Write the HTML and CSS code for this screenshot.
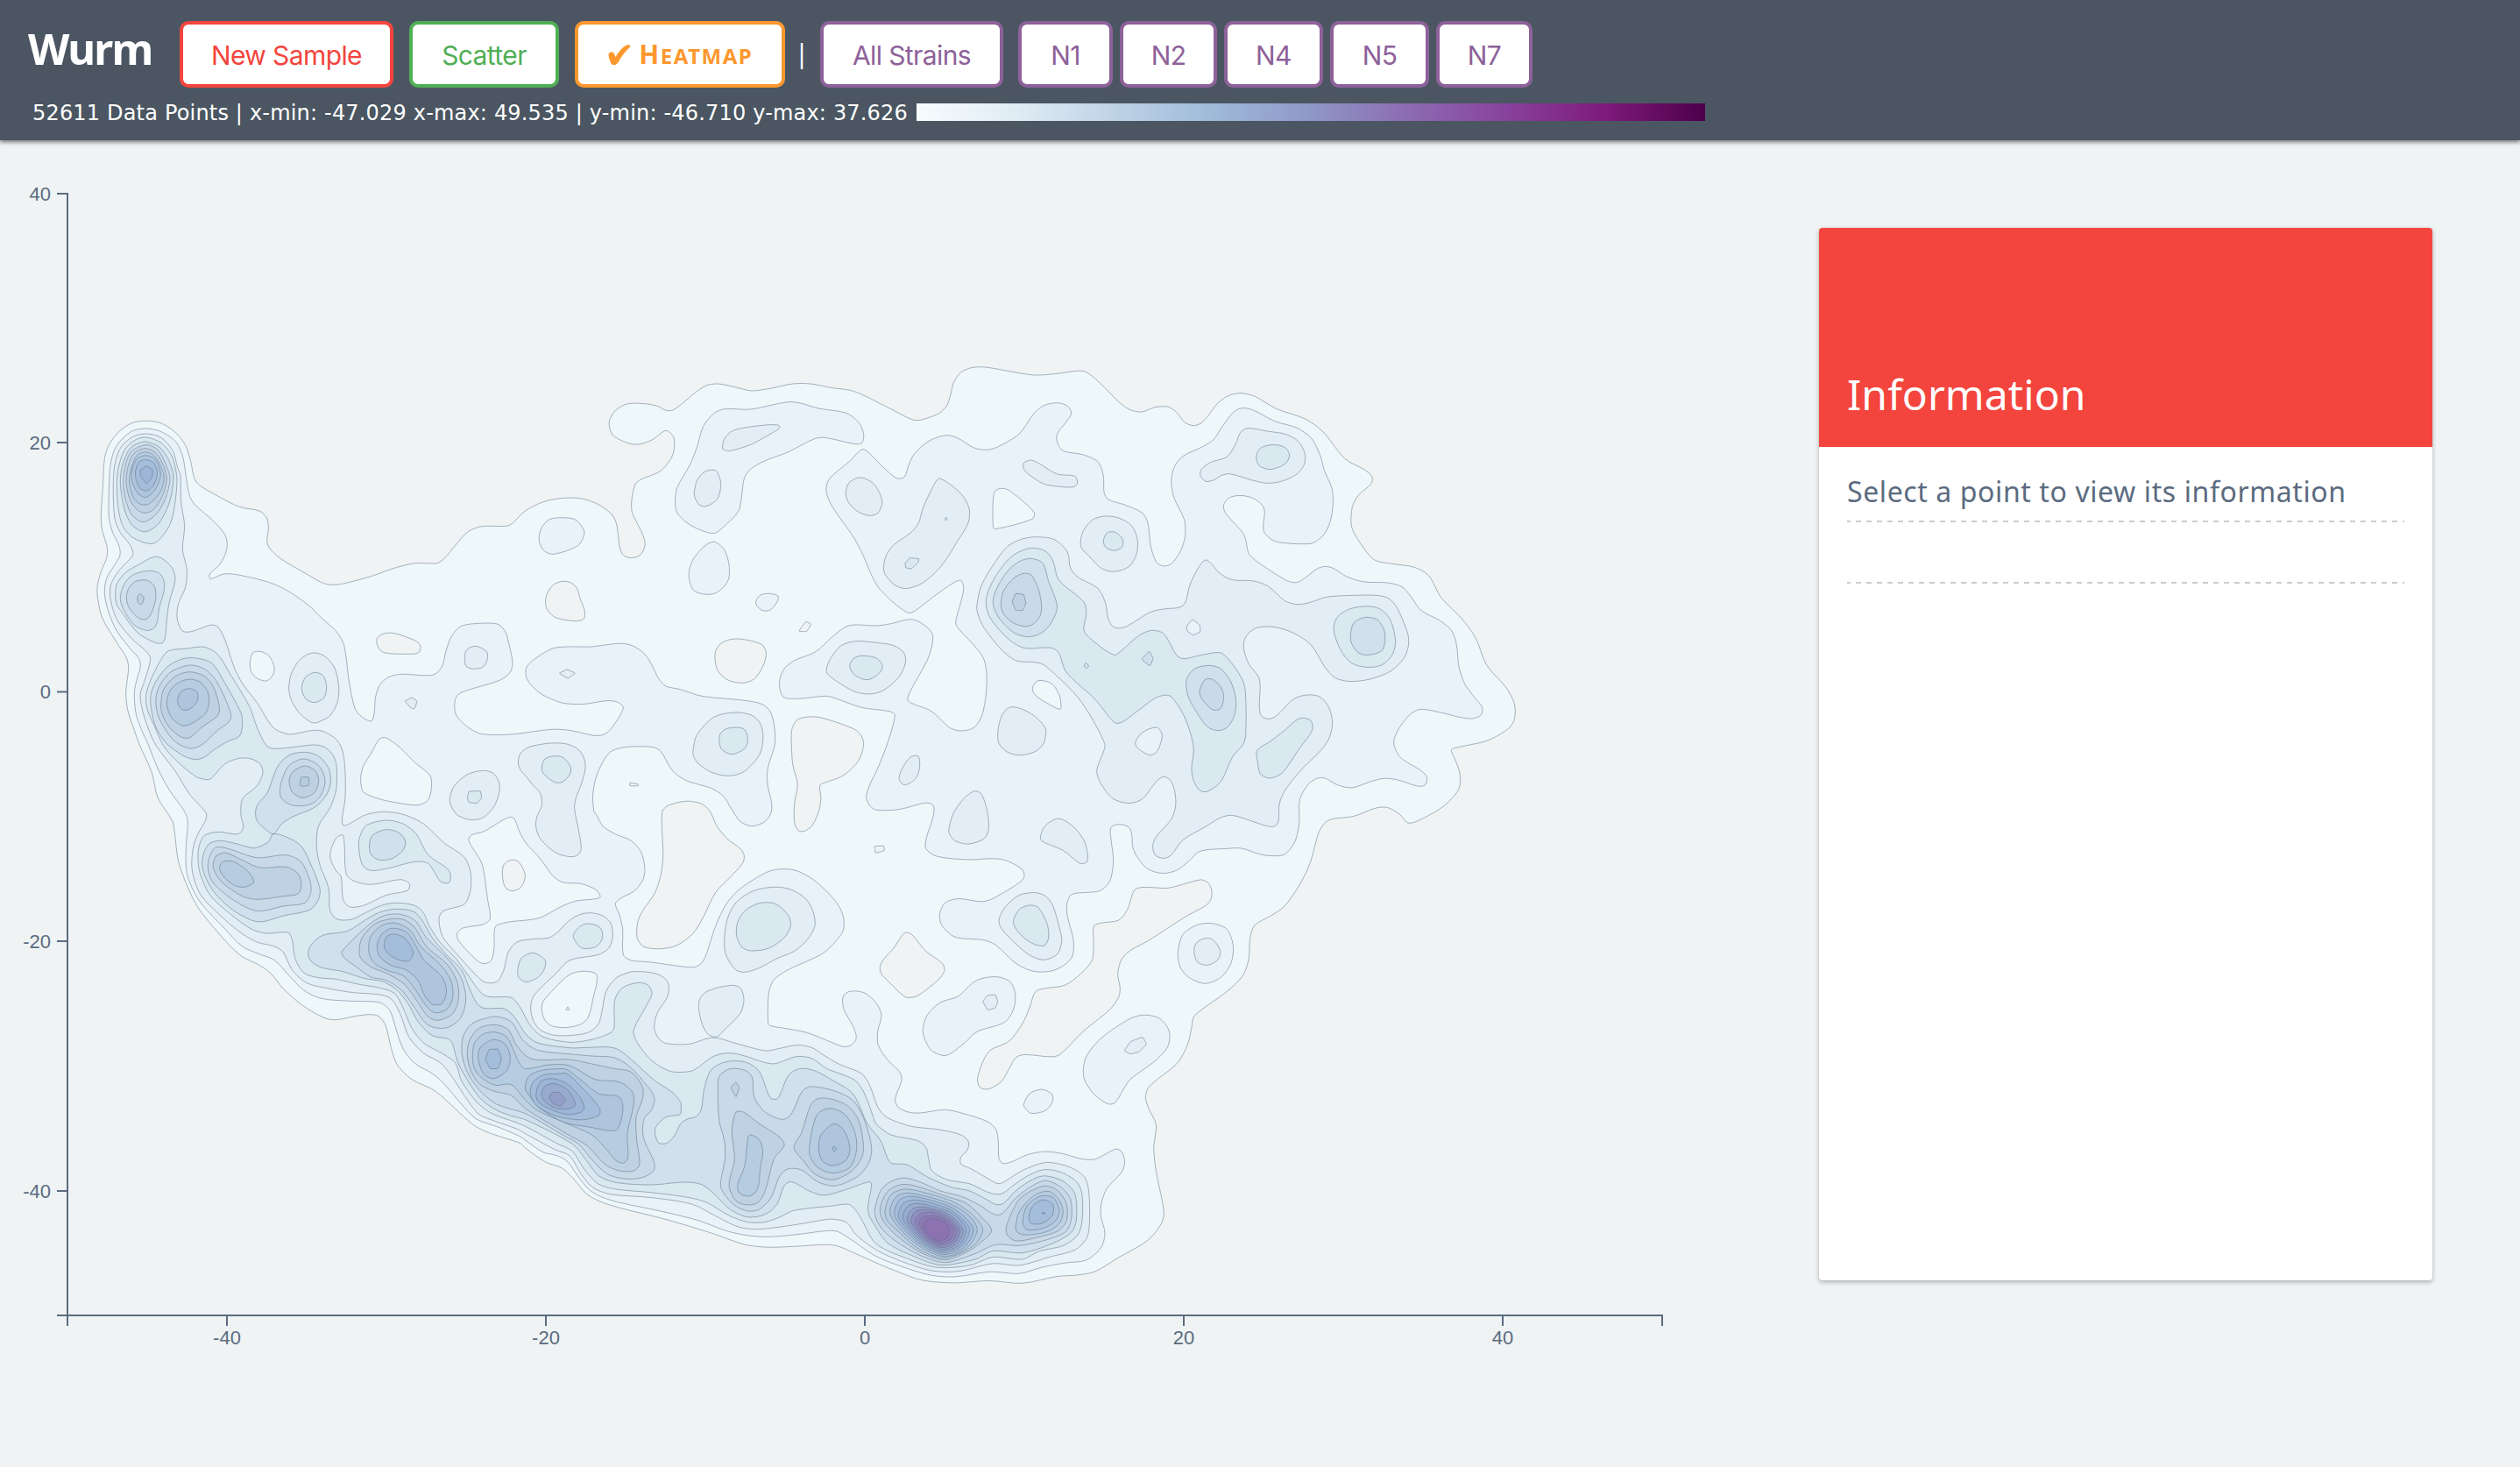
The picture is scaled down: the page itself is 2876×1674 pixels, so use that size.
FILE: index.html
```
<!DOCTYPE html>
<html lang="en">
<head>
<meta charset="utf-8">
<title>Wurm</title>
<link rel="stylesheet" href="styles.css">
</head>
<body>
<header class="topbar">
  <div class="controls">
    <h1 class="brand">Wurm</h1>
    <button class="btn red new-sample">New Sample</button>
    <button class="btn green scatter">Scatter</button>
    <button class="btn orange heatmap"><svg class="check" viewBox="0 0 26 24"><path d="M.5 12.500C0 8.500 5.500 6.500 7 10.500L8.500 14C12 8 16 3.500 20.500 .8C22.500 -.3 26.200.2 25.300 2.200C19 8.500 15.500 13 12 19.500C10 23.500 5 24.200 3.500 21.500C2.200 18.500 1 16 .5 12.500Z"/></svg><span class="smallcaps">H<span>eatmap</span></span></button>
    <span class="divider">|</span>
    <button class="btn purple all">All Strains</button>
    <div class="strains">
      <button class="btn purple n1">N1</button>
      <button class="btn purple n2">N2</button>
      <button class="btn purple n4">N4</button>
      <button class="btn purple n5">N5</button>
      <button class="btn purple n7">N7</button>
    </div>
  </div>
  <div class="status">
    <span class="stats">52611 Data Points | x-min: -47.029 x-max: 49.535 | y-min: -46.710 y-max: 37.626</span>
    <span class="legend"></span>
  </div>
</header>
<main class="content">
  <svg class="chart" viewBox="0 160 2000 1510">
    <g id="contours" class="contours"></g>
    <g class="axis">
      <path d="M65 221H77V1501H65"/>
      <path d="M65 505H77M65 789.500H77M65 1074H77M65 1359H77"/>
      <path d="M77 1513V1501H1897V1513"/>
      <path d="M259 1501V1513M623 1501V1513M987 1501V1513M1351 1501V1513M1715 1501V1513"/>
    </g>
    <g class="labels y">
      <text x="58" y="229">40</text><text x="58" y="513">20</text><text x="58" y="797">0</text><text x="58" y="1082">-20</text><text x="58" y="1367">-40</text>
    </g>
    <g class="labels x">
      <text x="259" y="1534">-40</text><text x="623" y="1534">-20</text><text x="987" y="1534">0</text><text x="1351" y="1534">20</text><text x="1715" y="1534">40</text>
    </g>
  </svg>
  <aside class="card">
    <div class="card-head"><h2>Information</h2></div>
    <div class="card-body">
      <p class="row">Select a point to view its information</p>
      <p class="row"></p>
    </div>
  </aside>
</main>
<script src="contours.js"></script>
</body>
</html>
```
FILE: styles.css
```
* { box-sizing: border-box; }
body {
  margin: 0;
  min-height: 1674px;
  background: #eff3f4;
  color: #5b6b80;
  font-family: "Noto Sans", "Open Sans", sans-serif;
  overflow: hidden;
}
.topbar {
  position: relative;
  height: 160px;
  padding: 24px 0 0 32px;
  background: #4b5662;
  color: #fff;
  box-shadow: 0 2px 5px rgba(0, 0, 0, .55);
}
.controls { display: flex; height: 76px; white-space: nowrap; }
.brand {
  width: 173px;
  margin: 0;
  font-size: 49px;
  font-weight: 700;
  line-height: 63px;
  letter-spacing: -1.7px;
}
.btn {
  height: 76px;
  padding: 2px 0 0;
  border: 4px solid currentColor;
  border-radius: 10px;
  background: #fff;
  font: 400 30px/66px Inter, Roboto, sans-serif;
  letter-spacing: -.6px;
  white-space: nowrap;
}
.red { color: #f3453e; }
.green { color: #50ae55; }
.orange { color: #fd982f; }
.purple { color: #8d6199; }
.new-sample { width: 244px; margin-right: 18px; }
.scatter { width: 171px; margin-right: 18px; }
.heatmap { width: 240px; display: flex; align-items: center; justify-content: center; gap: 9px; }
.check { width: 26px; height: 24px; margin-top: -1px; fill: currentColor; }
.smallcaps { font: 700 30px/66px "Noto Sans", sans-serif; letter-spacing: 1.5px; margin-right: -1.5px; }
.smallcaps span { font-size: 24px; text-transform: uppercase; }
.divider { width: 40px; padding-right: 2px; text-align: center; font-size: 30px; line-height: 74px; }
.all { width: 209px; margin-right: 17px; }
.strains { display: flex; gap: 8px; }
.n1 { width: 108px; }
.n2 { width: 111px; }
.n4, .n5 { width: 113px; }
.n7 { width: 110px; }
.status { display: flex; padding: 18px 0 0 5px; height: 58px; }
.stats { width: 1009px; font-family: "DejaVu Sans", sans-serif; font-size: 24px; line-height: 23px; white-space: nowrap; letter-spacing: .18px; }
.legend {
  width: 900px;
  height: 20px;
  background: linear-gradient(90deg, #f7fcfd, #e0ecf4 12.5%, #bfd3e6 25%, #9fbad9 37.5%, #8f97c7 50%, #8c6bb1 62.500%, #88419d 75%, #7d1a7a 87.500%, #4d004b);
}
.content { display: flex; align-items: flex-start; }
.chart { width: 2000px; height: 1510px; flex: none; }
.contours path { stroke: #5b6b80; stroke-opacity: .5; stroke-width: 1; fill-rule: evenodd; stroke-linejoin: round; }
.axis path { fill: none; stroke: #5b6b80; stroke-width: 2; }
.labels { fill: #5b6b80; font: 22px "Liberation Sans", Arial, sans-serif; }
.labels.y { text-anchor: end; }
.labels.x { text-anchor: middle; }
.card {
  width: 700px;
  height: 1201px;
  margin: 100px 0 0 76px;
  border-radius: 4px;
  background: #fff;
  overflow: hidden;
  box-shadow: 0 2px 5px rgba(0, 0, 0, .3);
}
.card-head { height: 250px; padding: 158px 32px 0; background: #f3453e; color: #fff; }
.card-head h2 { margin: 0; font-size: 48px; font-weight: 400; line-height: 64px; letter-spacing: .1px; }
.card-body { padding: 16px 32px; }
.row {
  margin: 0;
  height: 70px;
  background: repeating-linear-gradient(90deg, #ccc 0 4px, transparent 4px 10px, #ccc 10px 12px) 0 100% / 100% 2px no-repeat;
  font-size: 32px;
  line-height: 70px;
  letter-spacing: .6px;
  white-space: nowrap;
}
```
FILE: contours.js
```
// Density contours. Every ring is a list of points given in one of the survey tiles A-H;
// a tile is [x origin, y origin, x step, y step].
const tiles = {
  A: [0, 400, 1 / 3, 1 / 3],
  B: [450, 450, 550 / 1568, 1 / 3],
  C: [950, 400, 1 / 3, 1 / 3],
  D: [1350, 400, 1 / 3, 560 / 1568],
  E: [150, 850, 1 / 3, 1 / 3],
  F: [600, 850, 1 / 3, 600 / 1568],
  G: [1000, 850, 1 / 3, 640 / 1568],
  H: [0, 0, 1, 1]
};
const colors = ["#eef7fa", "#eaf2f9", "#e2edf5", "#dae8f0", "#d2e0ed", "#c9d9e8", "#bfd2e3", "#b6cce1", "#afc5de",
  "#a4bdda", "#9db5d6", "#98abcf", "#949fc9", "#918fc1", "#8f85bc", "#8d7bb6", "#8c72b1"];
const levels = [
[ // 1
"A 502,241 550,248 600,280 635,325 652,375 672,450 740,495 820,535 890,550 914,575 919,610 914,650 922,675 960,712 1050,765 1105,796 1140,802 1175,798 1270,773 1350,745 1420,728 1480,729 B 142,577 165,560 200,515 240,470 285,452 365,451 385,441 425,400 480,370 540,356 605,356 660,375 705,408 722,440 728,480 734,525 745,550 770,560 800,550 815,520 812,490 790,440 773,400 774,350 790,300 865,263 905,210 910,150 884,124 840,155 795,171 755,165 710,138 699,95 720,55 760,32 825,33 860,42 884,55 908,53 950,20 H 791,450 806,440 820,438 840,442 858,446 880,443 905,438 925,438 C 0,128 60,136 100,150 200,200 275,237 305,237 365,215 392,188 405,150 415,110 440,75 480,58 530,58 600,70 690,84 760,80 850,69 880,80 930,125 985,180 1020,203 1060,210 1105,194 1150,193 1180,213 1205,245 1235,257 1260,250 1285,225 1315,185 D 150,147 195,136 245,146 320,186 420,219 480,260 555,346 620,380 647,402 645,425 600,463 580,500 577,560 600,605 655,668 720,682 790,692 840,718 885,790 955,857 1003,920 1040,1005 1105,1075 1132,1120 1138,1155 1130,1190 1105,1215 1040,1247 940,1268 919,1276 930,1303 948,1350 945,1400 900,1450 850,1481 775,1510 740,1480 700,1460 660,1462 585,1488 510,1497 485,1510 465,1540 H 1502,960 1495,985 1483,1010 1465,1035 G 1350,478 1295,505 1280,540 1275,600 1255,645 1200,690 1090,757 1080,790 1065,840 1030,890 935,955 922,985 935,1020 958,1060 955,1095 950,1130 960,1200 985,1305 975,1340 930,1385 830,1433 750,1472 690,1482 620,1486 500,1505 385,1498 270,1504 160,1497 80,1475 0,1448 F 1150,1525 1070,1495 1030,1490 930,1495 830,1498 750,1490 640,1457 480,1415 280,1370 210,1340 160,1290 120,1260 70,1245 0,1203 E 1330,1363 1230,1330 1170,1300 1040,1185 960,1145 910,1095 890,1040 870,960 848,930 820,923 770,928 700,941 660,934 590,895 520,835 480,785 440,755 380,725 330,680 230,560 190,480 160,395 148,300 140,260 90,180 70,95 28,0 A 460,1300 437,1230 431,1170 440,1085 432,1050 400,1000 350,915 335,850 333,810 345,760 365,710 367,675 350,615 346,570 352,470 358,370 375,320 410,275 455,247",
"A 1291,985 1310,970 1345,967 1390,980 1430,998 1440,1015 1432,1035 1400,1039 1315,1034 1293,1012",
"B 492,710 498,680 520,650 550,640 575,645 595,665 605,700 619,740 617,768 590,776 525,764 497,735",
"B 1044,885 1060,855 1090,840 1130,838 1195,856 1210,885 1200,930 1170,975 1130,988 1080,975 1050,940",
"B 1317,810 1340,778 1356,787 1341,812",
"B 1293,1150 1310,1115 1340,1105 1385,1106 1495,1145 1520,1170 1527,1200 1510,1255 1460,1305 1405,1328 1385,1338 1388,1385 1380,1430 1360,1475 1335,1495 1315,1494 1302,1465 1302,1400 1312,1335 1297,1270 1293,1220",
"F 467,200 490,180 550,168 600,175 630,197 655,243 690,280 735,310 748,330 743,352 700,395 650,440 610,510 575,560 520,597 460,608 405,602 382,577 383,530 400,495 440,445 462,390 470,330",
"F 1195,303 1225,301 1228,315 1198,322",
"F 357,113 385,117 385,122 357,122",
"E 1270,445 1275,410 1300,394 1325,400 1348,445 1335,485 1305,500 1280,488",
"G 13,620 25,600 60,568 97,526 120,529 170,577 225,610 234,630 215,655 145,700 120,706 97,704 40,660 17,640",
"G 745,507 770,498 830,490 860,460 885,405 920,398 1000,400 1110,377 1135,385 1148,405 1147,430 1130,448 1060,480 930,548 870,575 840,600 827,640 835,680 830,705 800,740 710,800 630,865 600,872 510,866 480,873 455,905 430,940 385,962 355,957 347,930 385,858 455,828 500,780 525,735 545,690 575,681 645,672 700,640 740,600 744,550",
"F 138,790 144,781 149,790"
],
[ // 2
"A 500,267 550,277 600,310 625,360 640,450 650,500 670,530 730,583 770,630 778,665 770,700 750,735 718,765 720,782 770,764 850,775 940,800 1000,832 1060,875 1100,915 1150,960 1175,1000 1185,1050 1195,1130 1215,1225 1240,1255 1272,1268 1282,1235 1285,1190 1300,1145 1330,1118 1375,1108 1450,1112 B 130,959 155,932 168,880 185,830 215,795 260,785 335,786 360,810 372,850 385,920 375,955 340,980 215,1022 198,1045 200,1095 240,1140 285,1163 380,1164 510,1147 570,1150 650,1168 680,1165 705,1145 745,1074 725,1053 690,1049 620,1060 555,1058 515,1045 470,1020 432,975 430,935 465,900 515,870 565,864 640,864 730,853 775,860 815,890 840,930 860,973 884,999 930,1010 1000,1033 1140,1048 1200,1062 1225,1090 1237,1140 1238,1200 1215,1280 1215,1340 1228,1400 1225,1435 1205,1463 1165,1478 1125,1462 1095,1415 1070,1375 1030,1348 950,1322 905,1288 865,1220 835,1207 750,1208 700,1227 660,1300 646,1370 650,1430 F 240,205 265,243 310,267 360,285 395,320 408,370 400,405 370,437 330,455 307,473 320,505 332,550 334,625 360,642 430,648 545,662 580,662 603,650 620,620 650,540 690,470 740,425 830,378 885,370 930,376 990,405 1060,465 1085,505 1090,540 1080,565 1020,620 900,670 850,700 832,740 830,830 840,838 920,850 970,860 1050,888 1090,900 1115,895 1132,873 1120,838 1090,790 1085,755 1100,738 1130,734 1165,742 1200,770 1218,805 1205,855 1207,895 1240,940 1280,975 1287,1000 1265,1055 1275,1080 1310,1095 G 150,1029 235,1020 300,1031 380,1053 410,1075 418,1110 420,1155 432,1170 460,1167 520,1145 580,1137 640,1143 700,1157 750,1158 820,1130 840,1137 851,1165 840,1195 790,1240 770,1285 770,1320 783,1365 770,1405 720,1440 650,1448 570,1460 490,1478 390,1473 270,1487 190,1483 100,1462 0,1430 F 1130,1485 1070,1452 1030,1449 930,1460 830,1467 760,1463 690,1450 590,1418 460,1390 300,1360 230,1335 190,1300 140,1240 100,1223 60,1215 0,1180 E 1330,1340 1260,1310 1180,1280 1130,1230 1070,1160 1030,1125 970,1090 930,1040 905,970 885,910 850,882 750,877 650,868 590,840 540,790 490,737 440,717 380,690 320,630 230,530 190,440 187,350 193,260 180,225 130,155 90,80 58,0 A 485,1300 465,1240 460,1170 470,1120 480,1085 476,1055 450,1025 400,960 370,890 358,830 365,780 395,730 411,700 408,670 385,620 373,570 374,450 380,380 400,325 450,277",
"A 856,1070 865,1035 890,1030 920,1045 938,1080 935,1110 912,1131 880,1122 860,1100",
"E 787,140 785,110 795,70 820,30 A 1298,1332 1320,1325 1370,1360 1420,1410 E 1010,92 1025,110 1027,150 1015,190 985,205 940,203 860,188 795,163",
"E 1155,328 1165,308 1205,297 1302,247 1330,300 1350,335 1400,390 1440,445 1470,468 F 150,412 190,414 240,432 254,455 170,466 120,483 50,515 0,523 E 1300,605 1250,618 1242,640 1242,690 1232,738 1206,749 1180,735 1120,670 1115,645 1135,627 1205,614 1228,595 1218,520 1205,425 1195,395",
"F 55,790 60,765 100,725 150,685 195,675 240,682 244,705 232,750 215,810 190,832 140,843 90,838 65,820",
"B 914,370 920,320 960,245 985,180 1005,110 1040,65 1075,50 1160,51 1280,26 1320,30 1380,48 1470,64 1510,95 1527,135 1522,166 1500,170 1400,148 1365,153 1280,198 1200,230 1155,260 1138,290 1130,350 1120,400 1080,445 1043,475 1005,468 955,442 920,405",
"C 102,338 125,350 180,405 222,438 247,432 260,395 280,355 330,310 390,290 430,300 485,333 530,340 570,328 640,285 690,215 725,188 770,179 805,190 818,215 800,245 770,285 770,315 790,343 860,357 910,382 928,430 930,485 945,510 1000,528 1060,555 1080,590 1090,670 1110,725 1135,738 1160,730 1190,690 1207,640 1205,580 1170,505 1160,450 1170,400 1200,362 1270,328 1305,305 1335,260 D 170,200 200,184 240,190 315,226 390,247 440,280 470,335 485,385 510,440 514,490 505,545 485,585 460,607 435,617 360,616 310,607 278,580 276,550 280,515 270,492 235,470 195,463 160,470 140,492 145,518 210,590 225,648 255,675 340,727 375,741 400,738 460,697 490,690 520,698 560,722 620,739 700,742 750,755 780,785 815,830 880,863 920,895 937,940 945,1010 965,1065 1000,1110 1025,1140 1020,1165 990,1176 950,1172 890,1158 820,1146 795,1152 770,1170 735,1215 722,1255 745,1300 820,1345 836,1366 827,1390 800,1391 740,1373 690,1367 640,1378 580,1397 530,1388 485,1366 460,1367 430,1385 400,1435 398,1510 H 1478,960 1466,975 G 1350,310 1310,305 1250,289 1200,290 1110,297 1070,325 1030,350 980,359 930,347 895,315 878,285 875,250 865,230 830,222 803,232 805,270 812,325 800,380 765,408 670,418 653,445 655,480 675,545 672,590 645,615 600,632 540,633 480,612 410,560 370,546 270,537 225,505 217,475 235,442 280,430 365,438 410,425 495,382 507,366 498,347 440,322 390,318 320,321 210,312 170,290 172,260 195,200 196,170 170,162 80,180 0,182 F 1180,183 1166,158 1175,125 1210,60 C 190,1340 214,1248 195,1235 100,1222 0,1187 B 1400,1033 1310,1042 1265,1035 1253,990 1265,945 1300,912 1370,882 1425,830 1470,795 C 80,939 150,942 200,935 265,920 300,930 340,965 343,1000 325,1060 265,1170 260,1200 340,1235 400,1290 440,1302 485,1290 515,1240 529,1130 520,1060 490,1015 430,950 422,930 440,860 449,815 440,787 410,798 350,840 270,898 245,890 200,855 150,800 100,690 70,635 0,535 B 1405,330 1415,290 1480,230",
"C 551,500 560,478 585,472 610,482 690,553 684,577 557,611 550,600",
"C 685,1155 705,1130 750,1140 775,1175 782,1205 780,1228 740,1210 695,1180",
"B 471,490 480,455 505,428 550,422 590,430 617,465 615,490 595,520 520,547 490,538 475,515",
"B 960,600 975,560 1015,515 1043,505 1075,535 1090,590 1085,640 1050,678 1015,685 975,672 960,635",
"B 1176,715 1190,688 1220,682 1248,690 1247,707 1225,737 1198,740",
"G 160,795 175,755 220,720 280,703 340,660 405,648 455,660 475,690 472,735 440,775 345,802 300,835 240,868 190,855 165,820",
"G 1033,580 1050,530 1100,503 1150,499 1200,515 1222,560 1215,610 1180,650 1125,667 1070,650 1040,620",
"G 709,910 720,870 770,820 870,765 920,755 970,765 1003,800 1000,840 960,880 870,935 845,965 818,1000 795,1004 750,980 715,940",
"G 505,1005 525,975 565,963 600,975 605,995 580,1022 530,1030 508,1013"
],
[ // 3
"A 500,285 550,297 590,340 608,400 618,430 620,520 632,600 625,680 640,750 635,810 610,870 607,920 625,960 655,962 720,940 745,945 770,990 800,1080 830,1140 880,1205 935,1290 985,1313 1020,1310 1075,1300 1110,1305 1155,1335 1175,1380 1182,1450 E 732,180 725,275 800,240 860,229 930,238 1000,270 1070,335 1140,385 1162,440 1160,500 1140,545 1065,570 1053,600 1065,655 1100,700 1200,807 1230,815 1255,808 1275,770 1290,710 1320,675 1370,665 1430,660 1460,640 F 150,523 185,506 220,501 260,508 290,530 298,570 285,605 250,625 150,643 100,685 30,745 17,780 25,820 50,850 100,866 170,865 220,855 250,830 262,790 275,735 310,695 360,677 410,677 455,685 485,705 490,735 480,760 450,800 440,845 455,875 480,890 560,892 640,873 720,890 820,912 870,905 930,895 980,903 1020,925 1080,955 1150,980 1180,1020 1205,1080 1235,1110 1290,1130 G 130,1068 220,1076 295,1092 317,1112 310,1135 290,1152 290,1172 325,1185 410,1225 430,1225 500,1190 575,1168 630,1172 680,1187 715,1210 728,1250 730,1340 720,1380 680,1412 600,1430 490,1455 400,1450 280,1472 190,1470 90,1445 0,1412 F 1130,1460 1100,1425 1060,1415 1030,1415 930,1430 800,1444 730,1438 650,1405 570,1370 430,1350 290,1340 230,1320 190,1280 150,1225 100,1207 0,1160 E 1320,1315 1250,1290 1190,1265 1150,1215 1100,1140 1060,1090 1000,1055 950,1000 920,920 890,870 850,855 760,848 680,835 600,815 550,770 520,710 490,690 430,675 370,640 300,580 235,510 208,430 210,360 225,310 255,255 255,232 200,170 150,90 83,0 A 510,1300 490,1240 480,1180 495,1130 515,1055 500,1030 450,985 400,920 378,850 380,800 410,750 452,705 455,690 445,665 410,620 392,570 388,450 395,380 415,330 455,295",
"E 680,380 700,320 725,310 735,440 760,465 820,478 920,461 952,475 945,498 870,515 800,548 750,555 725,530 718,450 700,430",
"F 593,790 595,760 620,735 700,717 735,725 747,760 735,800 680,850 660,868 645,871 623,862 605,835",
"A 1387,1200 1410,1188 1428,1200 1420,1225 1410,1226",
"A 989,1150 1000,1100 1030,1055 1070,1035 1110,1045 1145,1085 1160,1150 1155,1205 1130,1250 1095,1270 1080,1275 1060,1270 1020,1235 995,1190",
"B 229,905 235,875 265,862 300,880 303,905 290,932 262,940 235,932",
"B 537,955 562,942 588,955 565,972",
"B 1067,185 1075,150 1100,125 1140,114 1220,104 1250,106 1254,115 1200,150 1160,172 1090,194 1070,188",
"B 976,335 985,295 1010,265 1045,260 1060,290 1062,320 1050,360 1015,383 992,378 977,350",
"C 46,490 55,455 80,438 105,436 140,455 165,495 170,525 155,557 125,565 85,550 55,520",
"B 972,1220 985,1165 1040,1105 1105,1089 1160,1097 1190,1125 1200,1170 1190,1230 1140,1290 1090,1306 1035,1295 990,1265 974,1240",
"B 181,1380 195,1340 240,1300 290,1288 320,1296 340,1325 342,1360 325,1410 290,1448 250,1457 205,1440 183,1405",
"B 403,1260 410,1230 440,1207 510,1194 565,1198 605,1222 622,1270 610,1330 590,1385 F 167,190 180,250 190,310 175,330 145,333 100,320 50,280 35,245 38,215 55,180 50,145 20,115 B 428,1307 410,1285",
"C 0,1045 30,1010 80,995 160,1001 210,1010 245,1035 250,1070 230,1115 200,1145 165,1168 120,1176 70,1165 0,1122 B 1406,950 1412,920",
"C 175,740 185,700 210,665 270,622 295,590 310,540 345,465 367,438 440,490 468,540 465,590 430,650 375,735 310,795 250,815 210,800 180,765",
"C 655,385 680,375 710,388 770,423 830,430 839,455 825,467 780,466 725,457 680,430 656,407",
"C 850,650 860,615 890,580 930,567 980,573 1025,600 1045,650 1040,700 1015,740 965,757 920,745 880,705 852,675",
"D 60,400 63,380 95,357 150,340 180,300 197,262 222,248 290,258 350,267 395,290 418,330 415,365 390,395 340,417 290,424 240,415 160,394 130,400 105,414 78,418",
"C 567,1300 580,1250 605,1222 640,1224 690,1250 728,1290 730,1320 720,1350 690,1375 640,1385 600,1375 570,1345",
"C 228,1465 245,1420 270,1390 295,1390 298,1430 285,1465 247,1487",
"G 250,230 265,190 300,150 337,129 360,137 380,185 385,235 370,262 315,277 270,268 250,248",
"G 563,253 580,225 623,206 670,225 710,265 724,305 720,328 697,331 640,295 567,269",
"G 420,490 440,455 490,420 545,413 580,423 605,450 630,520 635,550 620,585 575,601 530,590 480,558 430,515",
"G 365,717 382,700 408,699 416,717 408,735 382,741",
"G 1088,578 1095,555 1120,542 1150,543 1178,575 1170,600 1135,616 1100,607",
"G 850,855 870,830 912,817 925,837 900,858 870,864",
"F 680,580 690,520 720,470 780,435 855,424 910,432 960,460 985,500 990,540 965,580 920,615 860,637 800,665 750,678 718,670 685,625",
"C 495,870 510,805 550,735 600,670 650,645 700,638 760,647 805,690 815,745 840,775 910,815 935,865 945,920 965,948 1000,947 1040,925 1090,895 1140,884 1185,880 1207,865 1225,800 1255,740 1278,717 1300,732 1320,757 D 150,726 180,734 240,736 290,752 350,800 390,811 430,806 490,788 560,783 660,782 705,792 735,825 770,905 772,945 755,985 710,1025 640,1050 570,1057 520,1045 485,1010 440,942 380,903 310,883 250,887 215,915 208,950 225,1000 262,1050 262,1135 268,1167 293,1177 320,1167 380,1113 430,1100 470,1107 500,1140 512,1190 500,1240 470,1280 410,1335 350,1405 330,1450 328,1500 318,1518 295,1521 240,1505 170,1485 130,1492 80,1520 0,1564 G 1010,308 985,317 955,308 947,280 960,255 1010,208 1025,170 1022,130 1008,100 985,89 960,102 910,152 865,163 810,150 770,110 755,75 765,45 780,15 C 932,1345 880,1245 830,1175 730,1080 700,1068 630,1062 580,1025 520,950 497,900",
"C 1213,945 1232,921 1258,940 1259,963 1235,974 1215,960",
"C 1037,1345 1055,1313 1085,1295 1115,1292 1129,1320 1112,1372 1087,1385 1050,1365"
],
[ // 4
"A 500,297 550,315 585,355 600,400 606,450 595,550 580,600 552,640 528,660 510,661 485,655 450,637 420,600 405,540 400,450 408,390 430,335 465,305",
"A 395,840 400,800 430,760 480,730 528,706 555,712 590,745 600,785 580,860 572,910 565,985 552,1003 520,995 470,965 420,900 400,870",
"A 577,1028 640,1020 700,1015 745,1040 790,1110 855,1220 880,1290 912,1352 940,1363 1000,1358 1075,1350 1110,1357 1140,1385 1152,1420 E 703,130 700,160 680,215 640,280 634,350 645,410 675,490 680,568 705,597 755,597 800,575 860,548 910,541 970,550 1000,575 1020,620 1060,680 1110,730 1150,785 1210,858 1300,865 1330,897 1365,960 1410,1000 1500,1018 F 200,883 260,870 300,850 303,800 305,760 330,725 385,709 420,717 432,743 415,775 370,850 380,885 430,940 490,972 530,976 575,970 640,930 690,919 740,925 810,945 850,951 890,940 930,929 980,935 1030,965 1090,985 1130,1002 1160,1040 1190,1110 G 0,1060 50,1090 140,1106 170,1125 180,1160 190,1190 240,1215 320,1227 380,1250 410,1256 435,1253 480,1225 530,1200 580,1187 640,1197 690,1225 705,1260 705,1330 690,1370 640,1400 560,1415 500,1438 400,1432 320,1455 210,1461 120,1440 0,1395 F 1150,1415 1130,1388 1105,1370 1050,1375 920,1388 870,1408 820,1423 760,1423 700,1405 620,1365 560,1350 430,1335 310,1325 250,1310 200,1265 160,1212 110,1190 0,1138 E 1310,1290 1230,1260 1180,1220 1130,1150 1110,1090 1070,1060 1000,1020 960,970 930,900 900,850 850,832 780,820 700,802 640,797 590,780 560,730 550,665 535,642 460,645 410,630 340,580 270,515 235,440 228,390 232,345 250,310 300,298 365,305 383,283 375,240 380,185 430,140 450,95 440,65 410,48 370,46 320,65 270,117 250,118 220,108 150,50 108,0 A 535,1300 505,1230 500,1180 515,1130 550,1060",
"A 1033,1155 1045,1120 1078,1102 1108,1115 1118,1155 1108,1190 1075,1205 1045,1190",
"C 59,1080 75,1052 105,1045 150,1053 172,1080 158,1107 120,1127 78,1112",
"B 1057,1185 1062,1160 1085,1143 1135,1144 1150,1175 1142,1210 1100,1232 1065,1215",
"B 480,1275 490,1248 520,1238 550,1244 573,1275 572,1300 545,1328 520,1327 485,1298",
"B 238,1380 243,1360 280,1358 284,1382 268,1400 242,1396",
"C 385,575 389,570 393,575 389,582",
"C 249,728 265,710 296,713 294,725 270,747 251,743",
"C 928,650 942,623 968,622 993,645 992,672 965,685 935,673",
"D 251,340 265,312 310,301 350,310 365,335 350,362 300,380 262,368",
"D 517,880 530,850 570,826 630,817 675,826 710,860 728,930 715,975 680,1005 630,1012 580,1000 545,965 520,910",
"D 254,1278 300,1248 350,1212 390,1180 415,1174 440,1185 442,1215 400,1270 345,1345 320,1361 293,1366 265,1352 255,1310",
"C 526,865 535,820 570,755 620,700 680,676 730,687 755,720 775,785 860,860 869,900 862,960 900,1000 965,1042 990,1027 1050,975 1095,958 1135,970 1180,1045 1205,1055 1260,1043 D 125,965 155,985 200,1045 214,1090 215,1230 205,1260 170,1298 135,1370 110,1395 78,1410 55,1403 35,1370 30,1330 37,1275 25,1220 0,1160 C 1160,1185 1135,1180 1100,1193 1050,1230 990,1273 965,1273 900,1195 800,1100 775,1035 750,1018 655,1018 600,985 540,915",
"F 722,570 725,530 750,495 800,472 855,474 900,510 907,540 885,575 830,607 770,614 740,603",
"F 163,570 185,542 215,533 255,545 263,575 240,602 190,605",
"E 1323,770 1335,730 1375,712 1417,738 1410,775 1385,800 1350,811 1325,795",
"E 778,340 785,305 805,275 870,258 930,270 975,305 1015,375 1085,427 1093,450 1087,472 1060,469 1040,440 1015,405 970,400 880,422 820,430 790,410",
"G 470,490 490,460 525,448 555,455 585,500 590,540 575,561 540,557 500,535 475,510"
],
[ // 5
"A 500,312 545,330 575,370 594,430 580,520 545,590 510,617 485,619 450,595 425,540 412,450 420,390 445,335 475,317",
"A 412,850 425,800 455,768 510,754 545,762 562,790 560,830 545,880 538,930 525,952 500,958 460,940 425,890",
"A 515,1190 530,1140 570,1085 620,1057 665,1052 725,1070 765,1130 825,1240 830,1280 820,1320 780,1338 735,1365 700,1392 670,1400 630,1388 570,1345 530,1280",
"E 425,225 435,200 465,165 500,75 540,35 595,25 640,38 675,80 682,130 665,175 625,215 550,247 515,270 486,305 460,290 430,260",
"E 486,305 530,315 580,345 610,400 645,490 640,530 610,565 520,585 450,605 410,600 340,560 280,500 245,430 245,380 265,340 300,328 350,336 415,353 440,348 470,330",
"E 815,340 825,310 870,290 915,300 938,330 930,360 895,388 850,394 820,375",
"E 605,715 615,685 655,652 740,637 800,600 850,573 905,562 965,570 995,600 1030,660 1080,720 1130,770 1160,840 1185,888 1210,902 1275,903 1310,930 1350,990 1390,1020 1500,1037 F 200,903 285,901 320,910 370,945 440,1000 500,1035 530,1065 532,1085 528,1102 480,1110 445,1140 443,1160 455,1187 482,1188 510,1165 530,1130 555,1115 580,1110 600,1090 610,1030 630,975 660,953 710,942 760,948 800,975 838,1053 863,1054 900,985 940,965 990,972 1050,1000 1120,1040 1170,1130 1215,1180 1248,1245 1290,1250 G 110,1175 180,1210 260,1237 320,1247 380,1272 410,1285 435,1282 480,1245 540,1213 580,1205 640,1220 680,1255 685,1330 665,1365 600,1395 500,1420 400,1415 340,1438 220,1454 120,1427 40,1393 F 1200,1440 1172,1390 1184,1310 1175,1303 1100,1325 1020,1343 970,1330 910,1303 885,1315 860,1370 820,1400 760,1408 700,1385 640,1335 600,1310 540,1304 430,1312 310,1305 250,1285 200,1230 160,1190 0,1118 E 1300,1270 1240,1245 1190,1205 1140,1130 1115,1080 1100,1025 1085,1007 1030,995 980,945 950,890 910,840 860,810 800,800 720,775 650,762 615,740",
"C 550,865 560,820 600,755 640,722 680,712 720,728 740,790 768,865 765,900 740,945 710,970 670,980 620,965 570,915",
"C 861,1080 869,1069 878,1080 869,1088",
"C 1060,1055 1085,1030 1098,1055 1087,1079 1062,1060",
"D 11,1070 15,1045 40,1017 90,1006 130,1017 165,1060 182,1120 175,1170 150,1205 120,1214 85,1203 50,1160 20,1110",
"D 574,910 582,875 600,860 630,852 665,860 688,890 692,930 680,960 632,973 600,965 577,935"
],
[ // 6
"A 500,323 540,340 568,390 582,440 565,510 535,560 500,585 480,585 450,560 430,510 422,450 430,390 450,345",
"A 433,850 440,815 465,790 505,787 530,810 533,850 520,895 503,919 480,919 445,885",
"A 533,1200 545,1150 585,1100 650,1077 700,1090 740,1130 790,1240 785,1270 745,1300 700,1343 670,1360 640,1360 595,1335 545,1260",
"E 509,150 515,120 540,70 590,48 640,70 663,120 650,170 620,200 575,209 540,203 512,180",
"E 262,420 268,380 290,350 330,355 430,386 530,377 580,400 610,460 615,500 595,540 520,552 440,569 390,555 320,510 275,465",
"E 720,710 745,680 820,610 870,583 920,580 970,600 1010,660 1090,740 1130,800 1145,870 1130,930 1090,965 1050,970 1010,955 970,900 925,840 870,805 820,795 770,760 730,730",
"E 1132,1060 1135,1000 1165,955 1215,935 1250,930 1300,947 1340,1010 1390,1045 1500,1058 F 230,928 300,932 350,955 400,1000 440,1050 430,1090 405,1115 403,1170 440,1245 438,1270 400,1290 340,1294 280,1280 230,1240 180,1190 130,1165 0,1100 E 1250,1230 1190,1180 1150,1120",
"F 658,1010 665,985 700,966 750,970 775,990 782,1050 820,1095 880,1117 910,1100 945,1035 975,1019 1050,1030 1120,1060 1160,1120 1184,1200 1175,1245 1140,1285 1060,1315 1000,1303 945,1268 900,1264 870,1285 840,1350 800,1385 760,1390 710,1370 670,1325 668,1300 682,1235 680,1180 662,1120",
"G 0,1280 20,1240 60,1217 100,1211 150,1222 220,1247 290,1262 350,1285 405,1313 432,1310 480,1265 540,1230 580,1218 630,1235 665,1270 668,1325 650,1360 590,1382 490,1400 410,1397 340,1422 240,1447 170,1434 100,1405 40,1370 5,1335 -5,1305",
"C 577,870 585,825 620,780 655,763 680,768 705,815 716,875 710,910 685,938 655,944 615,930 585,900",
"D 58,1085 75,1052 100,1050 130,1075 140,1110 128,1145 103,1148 75,1125 60,1105"
],
[ // 7
"A 500,335 535,352 560,395 571,440 555,500 525,545 495,556 470,545 445,510 432,450 440,390 460,350",
"A 470,845 480,832 493,845 488,865 480,870 472,860",
"A 551,1210 560,1160 600,1115 650,1100 700,1115 730,1150 751,1220 745,1250 690,1290 650,1325 620,1323 580,1290 555,1245",
"E 540,120 555,90 595,72 630,90 641,125 625,165 585,181 550,160",
"E 280,420 290,380 325,370 370,390 440,420 530,418 570,440 582,480 570,510 520,518 430,529 380,518 310,470",
"E 780,700 790,660 830,615 880,597 930,597 970,625 1010,690 1080,750 1115,810 1120,870 1100,920 1050,943 1015,930 980,880 935,820 880,785 820,760 785,730",
"E 1150,1060 1158,1010 1190,970 1245,958 1290,975 1320,1030 1370,1075 1500,1077 F 220,950 300,965 360,975 400,1020 400,1055 378,1110 380,1180 390,1250 370,1270 320,1270 270,1250 210,1195 140,1160 0,1085 E 1300,1200 1240,1185 1190,1160 1160,1110",
"F 703,1022 720,1005 731,1022 720,1049",
"F 706,1150 720,1095 745,1095 800,1130 870,1170 885,1195 850,1235 820,1330 795,1365 760,1372 720,1360 697,1320 700,1290 715,1235",
"F 919,1195 945,1155 975,1075 1000,1055 1040,1055 1100,1075 1140,1120 1157,1205 1145,1240 1110,1275 1050,1297 990,1280 950,1240 922,1210",
"G 13,1300 35,1252 80,1230 130,1232 240,1262 310,1282 360,1320 395,1357 360,1390 310,1418 235,1440 150,1418 70,1372 25,1332",
"G 445,1350 460,1315 490,1270 540,1243 580,1233 620,1245 650,1280 652,1330 620,1360 560,1375 480,1387 450,1372",
"C 616,860 628,832 655,836 662,865 652,890 628,889"
],
[ // 8
"A 500,347 530,362 552,400 562,435 548,485 510,525 480,526 455,500 443,450 450,400 470,358",
"A 571,1200 585,1160 615,1135 650,1125 685,1135 710,1165 716,1200 705,1240 660,1275 625,1284 590,1260 575,1230",
"E 581,111 607,111 608,138 590,142 577,138",
"E 302,425 310,402 345,398 390,425 412,450 418,472 385,487 350,480 315,450",
"E 812,700 820,655 860,617 905,610 955,635 990,690 1060,755 1095,810 1100,865 1080,905 1040,917 1010,895 970,835 930,790 870,770 825,740",
"E 1168,1070 1175,1020 1205,990 1245,983 1285,1000 1310,1050 1330,1092 1350,1109 1430,1095 1500,1098 F 240,998 320,1005 365,1035 370,1070 348,1160 350,1230 335,1247 310,1240 280,1210 230,1165 170,1140 40,1090 E 1350,1217 1300,1163 1245,1165 1200,1140 1175,1110",
"F 761,1170 770,1163 800,1178 812,1215 803,1260 798,1310 785,1335 760,1346 730,1335 726,1310 750,1255",
"F 971,1205 980,1150 1000,1100 1040,1084 1090,1100 1125,1150 1133,1205 1110,1260 1050,1277 1000,1260 975,1230",
"G 30,1303 50,1258 100,1242 180,1255 270,1280 335,1318 365,1357 330,1402 232,1435 145,1409 75,1360 38,1330",
"G 478,1345 490,1305 540,1260 590,1248 625,1270 640,1305 625,1340 580,1362 510,1370 482,1362"
],
[ // 9
"A 500,359 530,372 550,420 535,470 502,502 475,492 453,450 452,410 468,372",
"A 608,1195 620,1167 650,1157 676,1170 675,1200 650,1227 625,1230 610,1210",
"E 841,690 855,650 890,628 940,640 975,690 1000,735 1060,790 1078,830 1075,865 1060,888 1030,888 1005,860 980,805 940,770 890,755 850,725",
"E 1187,1070 1195,1035 1240,1009 1280,1025 1297,1070 1285,1115 1240,1142 1205,1125",
"E 1348,1175 1360,1135 1400,1115 1460,1109 F 140,968 190,1000 250,1040 320,1050 333,1085 315,1145 290,1151 220,1140 130,1125 50,1085 E 1365,1205",
"F 1003,1205 1010,1165 1055,1130 1090,1150 1110,1205 1095,1240 1050,1255 1015,1240",
"G 47,1308 68,1264 115,1253 250,1282 320,1318 346,1357 308,1408 232,1430 148,1402 80,1352",
"G 502,1335 515,1290 560,1262 605,1265 627,1300 615,1330 570,1352 515,1355"
],
[ // 10
"A 500,374 526,384 539,420 525,462 503,480 478,470 463,425 475,382",
"E 865,690 875,655 905,648 940,665 965,712 948,740 905,732 875,710",
"E 1212,1075 1225,1043 1255,1042 1267,1075 1255,1108 1228,1108",
"E 1366,1195 1375,1155 1410,1130 1460,1126 F 140,980 190,1020 253,1083 250,1105 190,1118 110,1108 40,1078",
"F 1050,1203 1056,1196 1064,1205 1056,1213",
"G 523,1320 535,1290 570,1272 605,1285 603,1315 570,1337 530,1338",
"G 62,1312 80,1272 125,1262 250,1290 305,1322 333,1357 300,1405 230,1425 150,1396 88,1348"
],
[ // 11
"A 480,410 502,395 523,408 520,435 502,456 482,432",
"F 35,1045 50,1005 90,995 140,1010 185,1050 200,1080 190,1095 140,1102 80,1085 45,1066",
"G 76,1316 95,1280 145,1273 250,1298 298,1328 320,1357 292,1401 228,1420 152,1391 97,1346",
"G 568,1308 578,1308 578,1310 568,1310"
],
[ // 12
"F 54,1045 65,1018 100,1010 145,1030 170,1070 160,1083 110,1085 70,1067",
"G 90,1320 110,1288 150,1282 250,1305 290,1330 308,1357 285,1398 225,1415 157,1388 108,1347"
],
[ // 13
"F 80,1053 90,1037 115,1036 138,1058 120,1077 95,1070",
"G 105,1325 125,1297 165,1292 250,1313 297,1357 275,1396 224,1410 160,1384 120,1350"
],
[ "G 118,1328 140,1302 200,1302 255,1323 287,1357 268,1392 222,1405 162,1379 132,1351" ],
[ "G 133,1333 150,1311 200,1308 250,1328 277,1357 262,1387 220,1399 168,1376 145,1355" ],
[ "G 146,1337 160,1320 200,1316 245,1332 267,1357 255,1382 218,1393 175,1374 157,1356" ],
[ "G 160,1342 175,1327 200,1324 235,1335 252,1355 243,1378 215,1386 190,1377 170,1360" ]
];

function points(ring) {
  let tile = tiles.H;
  const out = [];
  for (const token of ring.split(" ")) {
    if (tiles[token]) { tile = tiles[token]; continue; }
    const [x, y] = token.split(",").map(Number);
    out.push([tile[0] + x * tile[2], tile[1] + y * tile[3]]);
  }
  return out;
}

// Closed centripetal-like spline; handles are limited so that close points stay smooth.
function spline(p) {
  const n = p.length;
  const at = i => p[(i + n) % n];
  const f = v => v.toFixed(1);
  const dist = (a, b) => Math.hypot(a[0] - b[0], a[1] - b[1]);
  const k = n < 7 ? 0.08 : 0.3;
  let d = `M${f(p[0][0])} ${f(p[0][1])}`;
  for (let i = 0; i < n; i++) {
    const a = at(i - 1), b = at(i), c = at(i + 1), e = at(i + 2);
    const len = dist(b, c);
    const s1 = k * len / (dist(a, b) + len || 1), s2 = k * len / (len + dist(c, e) || 1);
    d += `C${f(b[0] + (c[0] - a[0]) * s1)} ${f(b[1] + (c[1] - a[1]) * s1)} ${f(c[0] - (e[0] - b[0]) * s2)} ${f(c[1] - (e[1] - b[1]) * s2)} ${f(c[0])} ${f(c[1])}`;
  }
  return d + "Z";
}

const group = document.getElementById("contours");
levels.forEach((rings, i) => {
  const path = document.createElementNS("http://www.w3.org/2000/svg", "path");
  path.setAttribute("d", rings.map(r => spline(points(r))).join(""));
  path.setAttribute("fill", colors[i]);
  group.appendChild(path);
});
```
